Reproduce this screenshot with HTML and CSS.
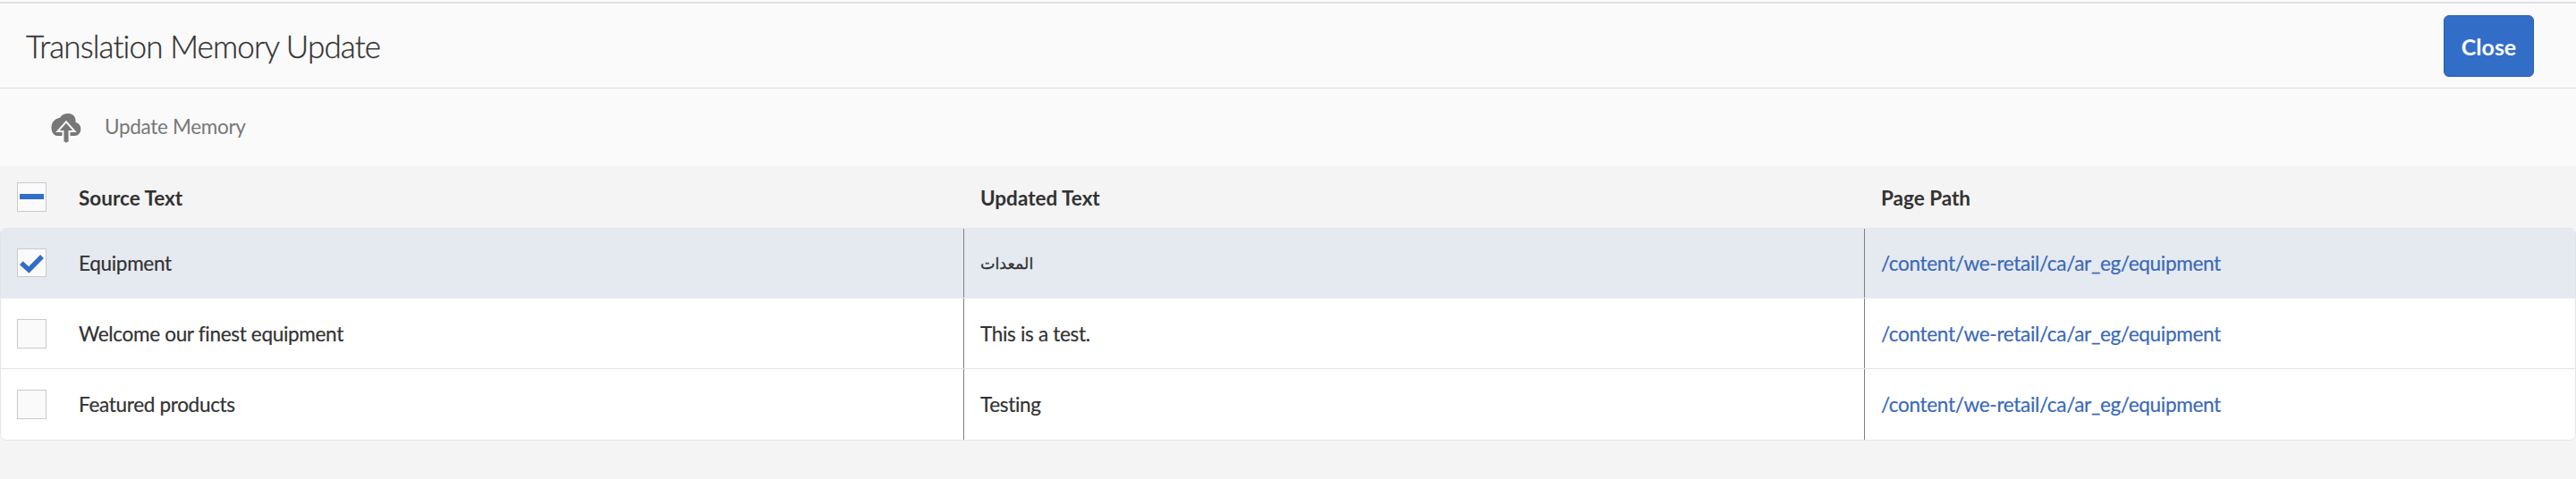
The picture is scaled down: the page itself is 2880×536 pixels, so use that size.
FILE: index.html
```html
<!DOCTYPE html>
<html lang="en">
<head>
<meta charset="utf-8">
<title>Translation Memory Update</title>
<link rel="stylesheet" href="styles.css">
</head>
<body>
<header class="titlebar">
  <h1 class="title">Translation Memory Update</h1>
  <button class="close">Close</button>
</header>
<div class="toolbar">
  <svg class="cloud" viewBox="0 0 34 34" width="34" height="34">
    <path fill="#777" d="M7 26C3 25.500 .5 22.300.5 17C.5 10.500 4.600 6.500 10 5.800C12 2.300 15.500 1 19.500 1C24.500 1 28 4.500 27.600 11C31.500 12 33.300 14.800 33.300 18.500C33.300 22.800 30.500 26 26.500 26Z"/>
    <path fill="#777" stroke="#fafafa" stroke-width="4" stroke-linejoin="miter" d="M17 11.800L24.300 20H19.500V36H14.500V20H9.700Z"/>
    <path fill="#777" d="M17 11.800L24.300 20H19.500V32.700H14.500V20H9.700Z"/>
  </svg>
  <span class="action">Update Memory</span>
</div>
<main class="table">
  <div class="row head">
    <div class="cell first"><span class="box"><svg width="31" height="31" viewBox="0 0 31 31"><rect x="2" y="12" width="27" height="6" rx=".6" fill="#326ec8"/></svg></span><span class="label">Source Text</span></div>
    <div class="cell"><span class="label">Updated Text</span></div>
    <div class="cell"><span class="label">Page Path</span></div>
  </div>
  <div class="body">
    <div class="row selected">
      <div class="cell first"><span class="box"><svg width="31" height="30" viewBox="0 0 31 30"><path d="M3.800 15.300L12.300 23L27 8" fill="none" stroke="#326ec8" stroke-width="5.400"/></svg></span><span class="text">Equipment</span></div>
      <div class="cell"><span class="arabic" lang="ar" dir="rtl">المعدات</span></div>
      <div class="cell"><a class="path">/content/we-retail/ca/ar_eg/equipment</a></div>
    </div>
    <div class="row">
      <div class="cell first"><span class="box"></span><span class="text">Welcome our finest equipment</span></div>
      <div class="cell"><span class="text">This is a test.</span></div>
      <div class="cell"><a class="path">/content/we-retail/ca/ar_eg/equipment</a></div>
    </div>
    <div class="row">
      <div class="cell first"><span class="box"></span><span class="text">Featured products</span></div>
      <div class="cell"><span class="text">Testing</span></div>
      <div class="cell"><a class="path">/content/we-retail/ca/ar_eg/equipment</a></div>
    </div>
  </div>
</main>
</body>
</html>
```
FILE: styles.css
```css
* { box-sizing: border-box; }
body {
  margin: 0;
  height: 536px;
  padding-top: 2px;
  background: #f4f4f4;
  box-shadow: inset 0 2px #fafafa;
  color: #323232;
  font: 22.5px/30px Lato, "Noto Sans", sans-serif;
  letter-spacing: -.31px;
}
.titlebar {
  height: 97px;
  display: flex;
  justify-content: space-between;
  align-items: flex-start;
  padding: 13px 47px 0 29px;
  background: #fafafa;
  border-top: 2px solid #dfe0e4;
  border-bottom: 1px solid #dedede;
}
.title { margin: 11px 0 0; font-size: 35px; line-height: 46px; font-weight: 300; letter-spacing: -.87px; -webkit-text-stroke: .3px #323232; }
.close {
  width: 101px;
  height: 69px;
  padding: 0;
  border: 1px solid #2a60b4;
  border-radius: 6px;
  background: #326ec8;
  color: #fff;
  font: bold 25px/30px Lato, "Noto Sans", sans-serif;
}
.toolbar {
  height: 87px;
  display: flex;
  align-items: flex-start;
  gap: 26px;
  padding: 27px 0 0 57px;
  background: #fafafa;
  color: #777;
}
.cloud { display: block; }
.action { margin-top: 1px; }
.row { display: grid; grid-template-columns: 1076px 1007px 1fr; height: 79px; border-bottom: 1px solid #e4e4e4; }
.head { height: 69px; border: 0; padding-left: 1px; font-weight: 700; letter-spacing: 0; }
.cell { display: flex; align-items: center; padding-left: 18px; border-left: 1px solid #7e8084; }
.head .cell { border-color: transparent; }
.label { padding-top: 3px; }
.text, .path { padding-top: 1px; -webkit-text-stroke: .2px currentColor; }
.cell.first { border: 0; padding-left: 18px; gap: 36px; }
.box {
  width: 33px;
  height: 33px;
  border: 1px solid #cacaca;
  background: #fafafa;
}
.box svg { display: block; }
.body { height: 238px; border: 1px solid #e4e4e4; border-radius: 7px; background: #fff; overflow: hidden; }
.body .row:last-child { border-bottom: 0; }
.selected { background: #e5e9f0; border-color: #e5e9f0; height: 78px; box-shadow: 0 -1px #e5e9f0; }
.selected .box { height: 32px; margin-bottom: 1px; }
.path { color: #3a69b8; }
.arabic { font: 17.5px/30px "DejaVu Sans", sans-serif; letter-spacing: 0; -webkit-text-stroke: .3px #323232; }
```
